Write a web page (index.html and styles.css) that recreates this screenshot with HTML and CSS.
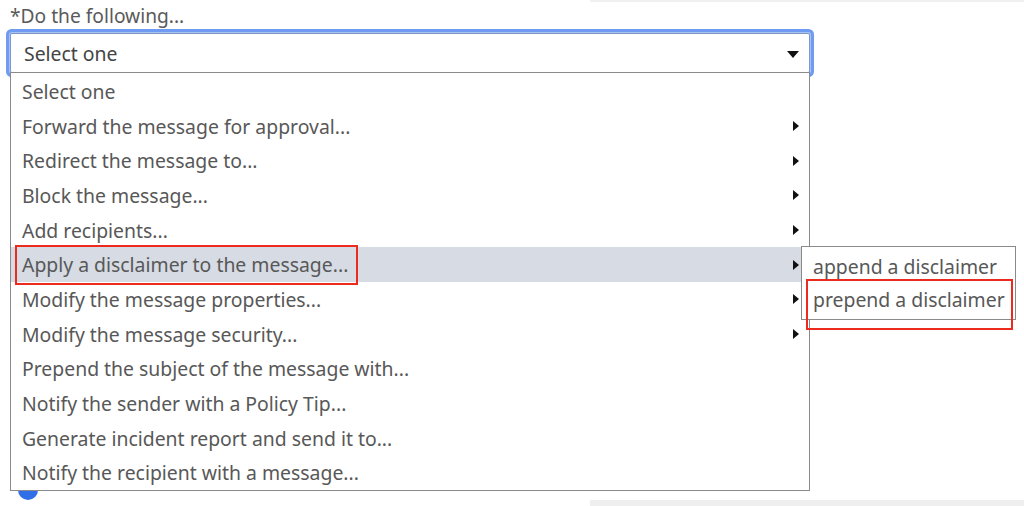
FILE: index.html
```html
<!DOCTYPE html>
<html>
<head>
<meta charset="utf-8">
<link rel="stylesheet" href="styles.css">
</head>
<body>
<div class="topline"></div>
<div class="page">
  <div class="label">*Do the following...</div>
  <div class="field">
    <div class="select">
      <span>Select one</span>
      <svg class="caret" width="12" height="7" viewBox="0 0 12 7"><path d="M0 0h12L6 7z" fill="#111"/></svg>
    </div>
    <div class="radio"></div>
    <div class="menu">
      <div class="item">Select one</div>
      <div class="item sub">Forward the message for approval...</div>
      <div class="item sub">Redirect the message to...</div>
      <div class="item sub">Block the message...</div>
      <div class="item sub">Add recipients...</div>
      <div class="item sub active"><span class="mark">Apply a disclaimer to the message...</span></div>
      <div class="item sub">Modify the message properties...</div>
      <div class="item sub">Modify the message security...</div>
      <div class="item">Prepend the subject of the message with...</div>
      <div class="item">Notify the sender with a Policy Tip...</div>
      <div class="item">Generate incident report and send it to...</div>
      <div class="item">Notify the recipient with a message...</div>
    </div>
    <div class="submenu">
      <div class="subitem">append a disclaimer</div>
      <div class="subitem">prepend a disclaimer</div>
    </div>
    <div class="mark2"></div>
  </div>
</div>
<div class="bottomband"></div>
</body>
</html>
```
FILE: styles.css
```css
* { box-sizing: border-box; }
html, body { margin: 0; padding: 0; background: #fff; }
body {
  width: 1024px; height: 506px; overflow: hidden; position: relative;
  font-family: "Noto Sans", "Open Sans", sans-serif;
  color: #555;
}
.topline {
  position: absolute; left: 590px; top: 0; width: 434px; height: 2px; background: #f0f0f0;
}
.bottomband {
  position: absolute; left: 590px; top: 500px; width: 434px; height: 6px; background: #efefef;
}
.page { padding: 3px 0 0 10px; }
.label { font-size: 19.2px; line-height: 26px; height: 30px; color: #5a5a5a; }
.field { position: relative; width: 800px; }
.select {
  height: 40px;
  border: 1px solid #7c98c8;
  border-radius: 2px;
  box-shadow: 0 0 0 1px #a9c2f0, 0 0 0 4px #6f9bf3;
  display: flex; align-items: center; justify-content: space-between;
  padding: 0 10px 0 13px;
  font-size: 19.4px; color: #444;
}
.caret { margin-top: 2px; }
.radio {
  position: absolute; left: 8px; top: 447px; width: 20px; height: 20px; border-radius: 50%; background: #2f6fe8;
}
.menu {
  position: absolute; left: 0; top: 39px; width: 800px;
  border: 1px solid #8a8a8a; background: #fff;
  padding: 1px 0 0 0;
}
.item {
  height: 34.7px; display: flex; align-items: center;
  padding-left: 11px; font-size: 19.4px; color: #585858; position: relative;
  white-space: nowrap;
}
.item.sub::after {
  content: ""; position: absolute; right: 10px; top: 50%; margin-top: -5px;
  border-left: 6px solid #111; border-top: 5px solid transparent; border-bottom: 5px solid transparent;
}
.item.active { background: #d6dbe4; }
.mark {
  display: inline-flex; align-items: center; height: 40px;
  border: 2px solid #ec2b1e; padding: 0 8px 0 5px; margin-left: -7px;
}
.submenu {
  position: absolute; left: 791px; top: 213px; width: 215px;
  border: 1px solid #8a8a8a; background: #fff; padding: 3px 0;
}
.subitem { height: 33px; display: flex; align-items: center; padding-left: 11px; font-size: 19.4px; color: #585858; white-space: nowrap; }
.mark2 {
  position: absolute; left: 796px; top: 246px; width: 207px; height: 51px; border: 2px solid #ec2b1e;
}
```
